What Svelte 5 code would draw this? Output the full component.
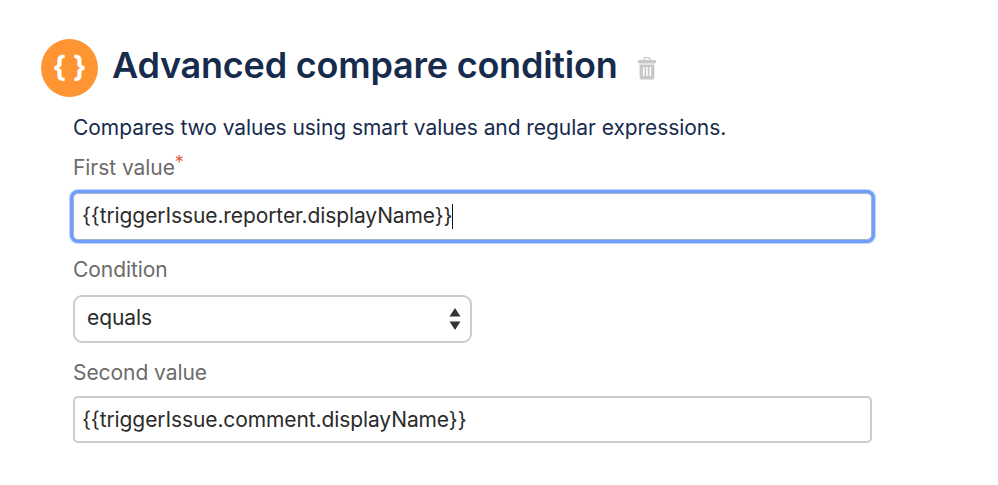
<script>
	const conditions = ['equals', 'does not equal', 'matches', 'contains'];
</script>

<div class="page">
	<header class="head">
		<div class="badge">
			<span class="braces">{'{ }'}</span>
		</div>
		<h1>Advanced compare condition</h1>
		<svg class="trash" width="18" height="23" viewBox="0 0 18 23" aria-hidden="true">
			<path d="M6 3.2V2.4C6 1.3 6.8.6 7.8.6h2.4c1 0 1.8.7 1.8 1.800v.8" fill="none" stroke="#c8c8c8" stroke-width="1.4" />
			<rect x="0" y="3" width="18" height="3.4" rx="1.4" fill="#c8c8c8" />
			<path fill-rule="evenodd" fill="#c8c8c8" d="M1.6 7.4h14.8v13c0 1.3-1 2.2-2.2 2.2H3.8c-1.200 0-2.200-.9-2.200-2.200zM5 10v9h1.500v-9zM8.250 10v9h1.500v-9zM11.500 10v9H13v-9z" />
		</svg>
	</header>

	<div class="form">
		<p class="desc">Compares two values using smart values and regular expressions.</p>

		<label class="label first" for="first">First value<span class="req">*</span></label>
		<div class="focus-box">
			<div id="first" class="field focused">{'{{triggerIssue.reporter.displayName}}'}<span class="caret"></span></div>
		</div>

		<label class="label cond" for="cond">Condition</label>
		<div id="cond" class="select">
			<span class="select-value">{conditions[0]}</span>
			<svg width="12" height="22" viewBox="0 0 12 22" aria-hidden="true">
				<path d="M6 0l5.500 8.500H.5z" fill="#333" />
				<path d="M6 22l5.500-8.500H.5z" fill="#333" />
			</svg>
		</div>

		<label class="label second" for="second">Second value</label>
		<div id="second" class="field plain">{'{{triggerIssue.comment.displayName}}'}</div>
	</div>
</div>

<style>
	:global(body) {
		background: #fff;
		font-family: Inter, 'Liberation Sans', sans-serif;
	}

	.page {
		width: 998px;
		height: 485px;
		box-sizing: border-box;
		padding: 39px 0 0 41px;
		overflow: hidden;
	}

	.head {
		display: flex;
		align-items: center;
		height: 58px;
	}

	.badge {
		width: 57px;
		height: 58px;
		border-radius: 50%;
		background: #ff9433;
		display: flex;
		align-items: center;
		justify-content: center;
		flex: none;
	}

	.braces {
		color: #fff;
		font-size: 29px;
		font-weight: 700;
		line-height: 1;
		margin-top: -3px;
	}

	h1 {
		margin: -6px 0 0 14px;
		font-size: 36px;
		font-weight: 600;
		letter-spacing: -0.22px;
		color: #172b4d;
		line-height: 52px;
		white-space: nowrap;
	}

	.trash {
		margin-left: 20px;
		margin-top: 1px;
	}

	.form {
		margin-left: 32px;
		width: 799px;
	}

	.desc {
		margin: 19px 0 0;
		font-size: 21px;
		letter-spacing: -0.06px;
		line-height: 24px;
		color: #172b4d;
	}

	.label {
		display: block;
		font-size: 21px;
		letter-spacing: -0.06px;
		line-height: 24px;
		color: #6b6b6b;
	}

	.first {
		margin-top: 16px;
	}

	.cond {
		margin-top: 18px;
	}

	.second {
		margin-top: 18px;
	}

	.req {
		color: #e5604d;
		font-size: 18px;
		position: relative;
		top: -6px;
		line-height: 0;
	}

	.field {
		box-sizing: border-box;
		height: 47px;
		padding: 0 7px;
		border: 2px solid #cccccc;
		border-radius: 5px;
		font-size: 21px;
		letter-spacing: -0.1px;
		line-height: 43px;
		color: #2b2b2b;
		background: #fff;
		white-space: nowrap;
	}

	.plain {
		margin-top: 11px;
	}

	.focus-box {
		margin-top: 13px;
	}

	.focused {
		border: 1px solid #a3b3c9;
		padding: 0 8px;
		box-shadow: 0 0 0 3px #6f9ffb, 0 0 1px 4px #bcd2fb;
	}

	.caret {
		display: inline-block;
		width: 1px;
		height: 25px;
		background: #111;
		vertical-align: -6px;
	}

	.select {
		box-sizing: border-box;
		width: 399px;
		height: 48px;
		margin-top: 13px;
		padding: 0 9px 0 12px;
		border: 2px solid #cccccc;
		border-radius: 9px;
		display: flex;
		align-items: center;
		justify-content: space-between;
		font-size: 21px;
		letter-spacing: -0.1px;
		color: #2b2b2b;
	}

	.select-value {
		margin-top: -4px;
	}
</style>
